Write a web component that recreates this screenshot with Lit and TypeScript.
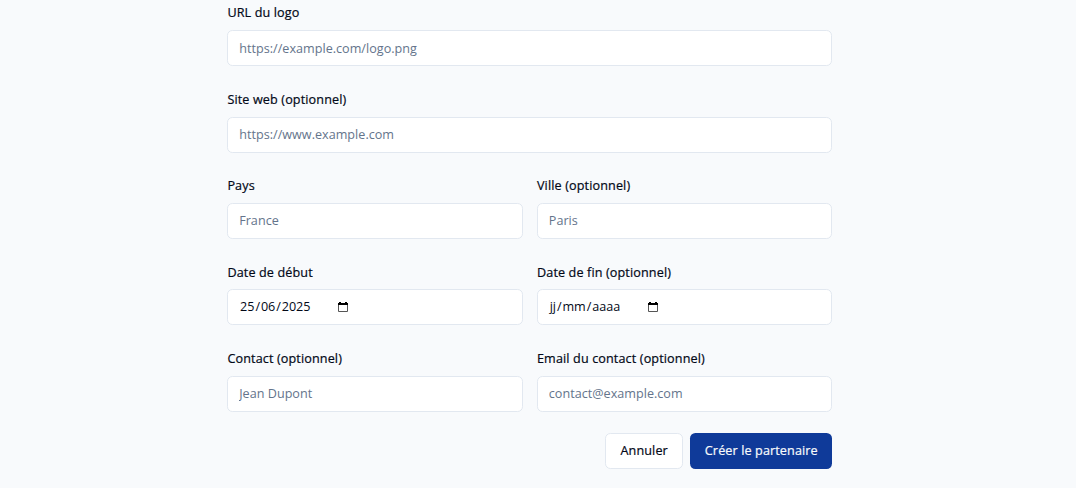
import { LitElement, html, css } from "lit";
import { customElement, property } from "lit/decorators.js";

const labelStyles = css`
  .label {
    display: block; box-sizing: border-box; height: 21.6px; padding-top: 1px; margin-bottom: 7.2px;
    line-height: 21.6px; font-weight: 500; letter-spacing: 0.13px; white-space: nowrap;
    -webkit-text-stroke: 0.2px currentColor;
  }
`;

@customElement("text-field")
class TextField extends LitElement {
  @property() label = "";
  @property() placeholder = "";

  static styles = [labelStyles, css`
    :host { display: block; min-width: 0; }
    .input {
      display: block; box-sizing: border-box; width: 100%; height: 36px; padding: 0 10.8px;
      border: 1px solid #e2e8f0; border-radius: 5.4px; background: #fff; color: #020817;
      font: inherit; letter-spacing: 0.02px; outline: none;
    }
    .input::placeholder { color: #64748b; opacity: 1; }
  `];

  render() {
    return html`<label class="label" for="field">${this.label}</label>
      <input class="input" id="field" placeholder=${this.placeholder} />`;
  }
}

@customElement("date-field")
class DateField extends LitElement {
  @property() label = "";
  @property() value = "";

  static styles = [labelStyles, css`
    :host { display: block; min-width: 0; }
    .box {
      display: flex; align-items: center; box-sizing: border-box; height: 36px; padding: 0 10.8px 1px;
      border: 1px solid #e2e8f0; border-radius: 5.4px; background: #fff; color: #020817;
    }
    .value { display: flex; width: 97.8px; white-space: nowrap; }
    .part { padding: 0 0.9px; }
    .icon { display: block; width: 12px; height: 12px; flex: none; }
  `];

  render() {
    const parts = this.value.split("/");
    return html`<div class="label">${this.label}</div>
      <div class="box">
        <span class="value">${parts.map((part, i) => html`${i ? html`<span>/</span>` : ""}<span class="part">${part}</span>`)}</span>
        <svg class="icon" viewBox="0 0 12 12">
          <path d="M1.5 4v6.5h9V4" fill="none" stroke="#555" />
          <path d="M1 2h1V1h2v1h4V1h2v1h1v2H1z" fill="#000" />
        </svg>
      </div>`;
  }
}

@customElement("app-root")
class AppRoot extends LitElement {
  static styles = css`
    :host {
      display: block; box-sizing: border-box; height: 488px; overflow: hidden;
      padding: 1.4px 0 0 227.4px; background: #f8fafc; color: #020817;
      font: 400 12.6px/18px "Open Sans", "Noto Sans", sans-serif;
    }
    .form { display: grid; row-gap: 21.6px; width: 604.8px; }
    .row { display: grid; grid-template-columns: 1fr 1fr; column-gap: 14.4px; }
    .actions { display: flex; justify-content: flex-end; gap: 7.2px; }
    .button {
      box-sizing: border-box; height: 36px; padding: 0 14.4px; border: 1px solid #e2e8f0;
      border-radius: 5.4px; background: #fff; color: #020817; font: inherit; font-weight: 500;
      letter-spacing: 0.12px; white-space: nowrap; -webkit-text-stroke: 0.2px currentColor;
    }
    .primary { border: 0; background: #0f3a99; color: #f8fafc; }
  `;

  render() {
    return html`<form class="form">
      <text-field label="URL du logo" placeholder="https://example.com/logo.png"></text-field>
      <text-field label="Site web (optionnel)" placeholder="https://www.example.com"></text-field>
      <div class="row">
        <text-field label="Pays" placeholder="France"></text-field>
        <text-field label="Ville (optionnel)" placeholder="Paris"></text-field>
      </div>
      <div class="row">
        <date-field label="Date de début" value="25/06/2025"></date-field>
        <date-field label="Date de fin (optionnel)" value="jj/mm/aaaa"></date-field>
      </div>
      <div class="row">
        <text-field label="Contact (optionnel)" placeholder="Jean Dupont"></text-field>
        <text-field label="Email du contact (optionnel)" placeholder="contact@example.com"></text-field>
      </div>
      <div class="actions">
        <button class="button" type="button">Annuler</button>
        <button class="button primary" type="button">Créer le partenaire</button>
      </div>
    </form>`;
  }
}
